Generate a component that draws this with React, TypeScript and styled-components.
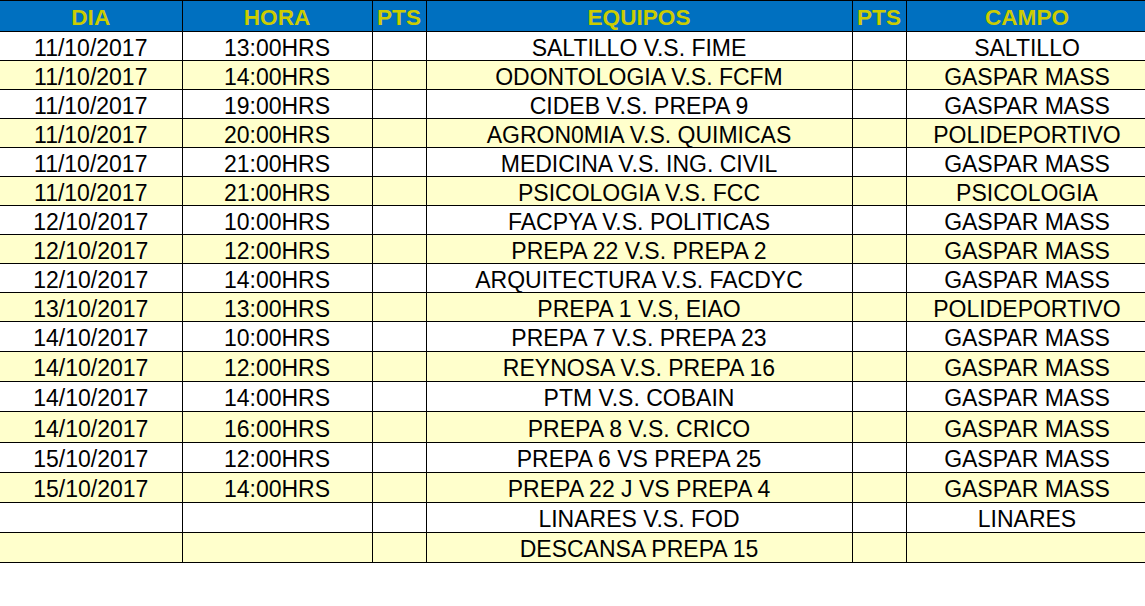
import React from 'react';
import styled, { createGlobalStyle } from 'styled-components';

interface Match {
    dia: string,
    hora: string,
    equipos: string,
    campo: string,
    height: number
}

const matches: Match[] = [
    { dia: '11/10/2017', hora: '13:00HRS', equipos: 'SALTILLO V.S. FIME', campo: 'SALTILLO', height: 29 },
    { dia: '11/10/2017', hora: '14:00HRS', equipos: 'ODONTOLOGIA V.S. FCFM', campo: 'GASPAR MASS', height: 29 },
    { dia: '11/10/2017', hora: '19:00HRS', equipos: 'CIDEB V.S. PREPA 9', campo: 'GASPAR MASS', height: 29 },
    { dia: '11/10/2017', hora: '20:00HRS', equipos: 'AGRON0MIA V.S. QUIMICAS', campo: 'POLIDEPORTIVO', height: 29 },
    { dia: '11/10/2017', hora: '21:00HRS', equipos: 'MEDICINA V.S. ING. CIVIL', campo: 'GASPAR MASS', height: 29 },
    { dia: '11/10/2017', hora: '21:00HRS', equipos: 'PSICOLOGIA V.S. FCC', campo: 'PSICOLOGIA', height: 29 },
    { dia: '12/10/2017', hora: '10:00HRS', equipos: 'FACPYA V.S. POLITICAS', campo: 'GASPAR MASS', height: 29 },
    { dia: '12/10/2017', hora: '12:00HRS', equipos: 'PREPA 22 V.S. PREPA 2', campo: 'GASPAR MASS', height: 29 },
    { dia: '12/10/2017', hora: '14:00HRS', equipos: 'ARQUITECTURA V.S. FACDYC', campo: 'GASPAR MASS', height: 29 },
    { dia: '13/10/2017', hora: '13:00HRS', equipos: 'PREPA 1 V.S, EIAO', campo: 'POLIDEPORTIVO', height: 29 },
    { dia: '14/10/2017', hora: '10:00HRS', equipos: 'PREPA 7 V.S. PREPA 23', campo: 'GASPAR MASS', height: 30 },
    { dia: '14/10/2017', hora: '12:00HRS', equipos: 'REYNOSA V.S. PREPA 16', campo: 'GASPAR MASS', height: 30 },
    { dia: '14/10/2017', hora: '14:00HRS', equipos: 'PTM V.S. COBAIN', campo: 'GASPAR MASS', height: 30 },
    { dia: '14/10/2017', hora: '16:00HRS', equipos: 'PREPA 8 V.S. CRICO', campo: 'GASPAR MASS', height: 31 },
    { dia: '15/10/2017', hora: '12:00HRS', equipos: 'PREPA 6 VS PREPA 25', campo: 'GASPAR MASS', height: 30 },
    { dia: '15/10/2017', hora: '14:00HRS', equipos: 'PREPA 22 J VS PREPA 4', campo: 'GASPAR MASS', height: 30 },
    { dia: '', hora: '', equipos: 'LINARES V.S. FOD', campo: 'LINARES', height: 30 },
    { dia: '', hora: '', equipos: 'DESCANSA PREPA 15', campo: '', height: 30 },
];

const GlobalStyle = createGlobalStyle`
    html, body {
        margin: 0;
        padding: 0;
        background: #fff;
    }
    body {
        font-family: "Liberation Sans", Arial, sans-serif;
        overflow: hidden;
    }
`

const App: React.FC = () => {
    return (<div>
        <GlobalStyle />
        <Sheet>
            <colgroup>
                <col style={{ width: 182 }} />
                <col style={{ width: 190 }} />
                <col style={{ width: 54 }} />
                <col style={{ width: 426 }} />
                <col style={{ width: 54 }} />
                <col style={{ width: 242 }} />
            </colgroup>
            <thead>
                <tr>
                    <HeadCell>DIA</HeadCell>
                    <HeadCell>HORA</HeadCell>
                    <HeadCell>PTS</HeadCell>
                    <HeadCell>EQUIPOS</HeadCell>
                    <HeadCell>PTS</HeadCell>
                    <HeadCell>CAMPO</HeadCell>
                </tr>
            </thead>
            <tbody>
                {matches.map((m, i) =>
                    <Row key={i} $striped={i % 2 === 1} $h={m.height}>
                        <Cell>{m.dia}</Cell>
                        <Cell>{m.hora}</Cell>
                        <Cell></Cell>
                        <Cell>{m.equipos}</Cell>
                        <Cell></Cell>
                        <Cell>{m.campo}</Cell>
                    </Row>
                )}
            </tbody>
        </Sheet>
    </div>);
}

const Sheet = styled.table`
    border-collapse: collapse;
    table-layout: fixed;
    width: 1148px;

    th:first-child, td:first-child {
        border-left: none;
    }
`

const HeadCell = styled.th`
    height: 27px;
    padding: 3px 0 0 0;
    background: #0070c0;
    color: #cccc00;
    font-size: 22.6px;
    font-weight: bold;
    text-align: center;
    vertical-align: middle;
    border: 1px solid #000;
    line-height: 22px;
`

const Row = styled.tr<{ $striped: boolean, $h: number }>`
    height: ${p => p.$h}px;
    background: ${p => p.$striped ? '#ffffcc' : '#ffffff'};
`

const Cell = styled.td`
    padding: 3px 0 0 0;
    font-size: 23px;
    color: #000;
    text-align: center;
    vertical-align: middle;
    border: 1px solid #000;
    line-height: 22px;
    white-space: nowrap;
`

export default App;
